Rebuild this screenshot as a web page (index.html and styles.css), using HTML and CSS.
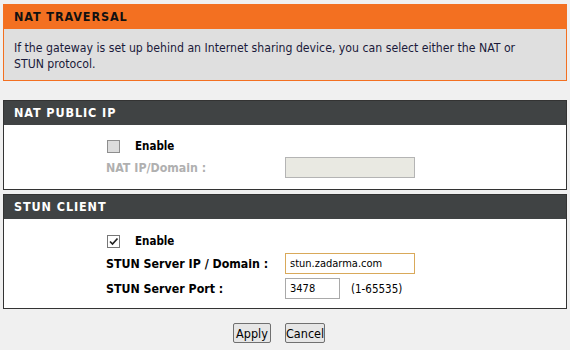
FILE: index.html
```html
<!DOCTYPE html>
<html lang="en">
<head>
  <meta charset="UTF-8" />
  <title>NAT Traversal</title>
  <link rel="stylesheet" href="styles.css">
</head>
<body>
  <div class="page">
    <div class="box box-orange">
      <div class="head head-orange">NAT TRAVERSAL</div>
      <div class="intro">If the gateway is set up behind an Internet sharing device, you can select either the NAT or STUN protocol.</div>
    </div>

    <div class="box box-dark nat">
      <div class="head head-dark">NAT PUBLIC IP</div>
      <div class="form form-nat">
        <div class="check-row">
          <span class="check"></span>
          <span class="check-label">Enable</span>
        </div>
        <div class="row">
          <span class="label disabled">NAT IP/Domain :</span>
          <input type="text" class="field field-disabled" disabled />
        </div>
      </div>
    </div>

    <div class="box box-dark">
      <div class="head head-dark">STUN CLIENT</div>
      <div class="form form-stun">
        <div class="check-row">
          <span class="check checked">
            <svg width="11" height="11" viewBox="0 0 11 11"><path d="M2 5.5 L4.5 8 L9.5 2.5" fill="none" stroke="#222" stroke-width="1.7"/></svg>
          </span>
          <span class="check-label">Enable</span>
        </div>
        <div class="row">
          <span class="label">STUN Server IP / Domain :</span>
          <input type="text" class="field field-focus" value="stun.zadarma.com" />
        </div>
        <div class="row">
          <span class="label">STUN Server Port :</span>
          <input type="text" class="field field-port" value="3478" />
          <span class="hint">(1-65535)</span>
        </div>
      </div>
    </div>

    <div class="actions">
      <button class="btn btn-apply">Apply</button>
      <button class="btn btn-cancel">Cancel</button>
    </div>
  </div>
</body>
</html>
```

FILE: styles.css
```css
body { margin: 0; background: #f0f0f0; font-family: "DejaVu Sans Condensed", "DejaVu Sans", sans-serif; font-size: 11px; color: #000; }
.page { width: 564px; padding: 4px 0 0 3px; }

.box { border: 1px solid #333; background: #fff; }
.box-orange { border-color: #f37021; background: #dfdfdf; }
.nat { margin-top: 19px; margin-bottom: 4px; }

.head { height: 24px; line-height: 24px; padding-left: 10px; font-weight: bold; font-size: 12.5px; letter-spacing: 0.9px; }
.head-orange { background: #f37021; color: #111; margin: -1px -1px 0; padding-left: 11px; height: 25px; line-height: 26px; }
.head-dark { background: #404344; color: #fff; }

.intro { padding: 11px 20px 8px 10px; line-height: 16px; color: #1a1a3a; font-size: 12.2px; }

.form { padding-left: 102px; }
.form-nat { padding-top: 12px; padding-bottom: 11px; }
.form-stun { padding-top: 13px; padding-bottom: 9px; }

.check-row { display: flex; align-items: center; height: 18px; }
.form-nat .check-row { margin-bottom: 2px; }
.form-stun .check-row { margin-bottom: 3px; }
.check { width: 11px; height: 11px; border: 1px solid #8e8e8e; background: #dcdcdc; margin-left: 1px; display: flex; align-items: center; justify-content: center; }
.check.checked { background: #fff; border-color: #777; }
.check-label { margin-left: 15px; font-weight: bold; font-size: 11.5px; }

.row { display: flex; align-items: center; height: 21px; margin-bottom: 4px; }
.row:last-child { margin-bottom: 0; }
.label { width: 179px; font-weight: bold; font-size: 12.3px; }
.label.disabled { color: #b0b0b0; }

.field { box-sizing: border-box; height: 21px; width: 130px; border: 1px solid #a9a9a9; padding: 0 4px; font-family: inherit; font-size: 11px; color: #000; background: #fff; margin: 0; }
.field-disabled { background: #e9e9e2; border-color: #b4b4b4; }
.field-focus { border-color: #d9a95a; }
.field-port { width: 55px; }
.hint { margin-left: 11px; font-size: 11.5px; }

.actions { display: flex; gap: 14px; padding: 14px 0 0 230px; }
.btn { height: 20px; padding: 0; font-family: inherit; font-size: 12.5px; background: #e6e6e6; border: 1px solid #707070; border-radius: 2px; color: #000; }
.btn-apply { width: 38px; }
.btn-cancel { width: 40px; }
```
